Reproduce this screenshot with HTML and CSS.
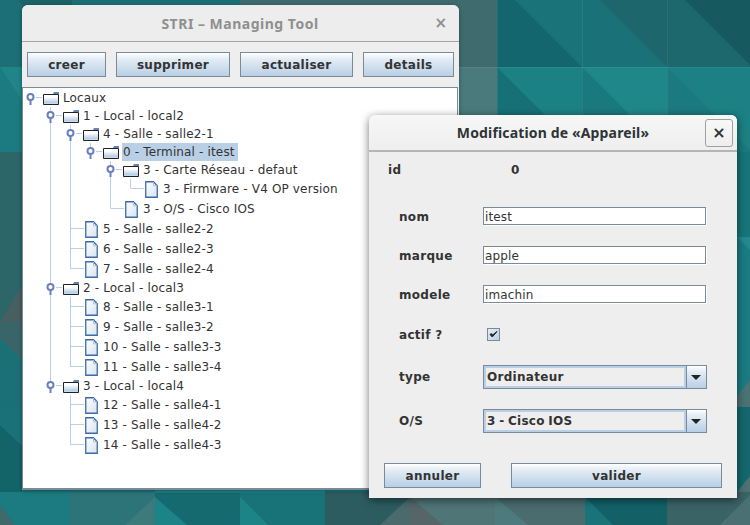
FILE: index.html
```html
<!DOCTYPE html>
<html>
<head>
<title>STRI - Managing Tool</title>
<meta charset="utf-8">
<link rel="stylesheet" href="styles.css">
</head>
<body>
<div class="desktop">

  <!-- wallpaper tiles, 85px grid -->
  <svg class="wallpaper" width="750" height="525" viewBox="0 0 750 525">
    <rect width="750" height="525" fill="#1a7379"/>
    <!-- top row -->
    <rect x="0" y="0" width="72" height="67" fill="#1b6f75"/>
    <polygon points="0,-18 72,-18 72,54" fill="#1a6469"/>
    <rect x="72" y="0" width="168" height="67" fill="#1b7076"/>
    <rect x="240" y="0" width="257" height="67" fill="#3f6b6e"/>
    <rect x="497" y="0" width="85" height="67" fill="#14666e"/>
    <polygon points="497,-18 582,-18 582,67" fill="#1a7379"/>
    <rect x="582" y="0" width="85" height="67" fill="#1a7278"/>
    <polygon points="582,-18 667,-18 667,67" fill="#1c666c"/>
    <rect x="667" y="0" width="83" height="67" fill="#1c686d"/>
    <polygon points="667,-18 752,-18 752,67" fill="#165a60"/>
    <!-- second row -->
    <rect x="0" y="67" width="72" height="85" fill="#1b7b80"/>
    <polygon points="0,67 22,67 40,100 22,100" fill="#208589"/>
    <rect x="412" y="67" width="85" height="85" fill="#4a7a7c"/>
    <rect x="497" y="67" width="85" height="85" fill="#167177"/>
    <polygon points="497,67 582,67 582,152" fill="#1c8185"/>
    <rect x="582" y="67" width="85" height="85" fill="#19797e"/>
    <polygon points="582,67 667,67 667,152" fill="#1f8789"/>
    <rect x="667" y="67" width="83" height="85" fill="#1a7a80"/>
    <polygon points="667,67 752,67 752,152" fill="#1c8084"/>
    <!-- right strip -->
    <rect x="737" y="152" width="13" height="85" fill="#177579"/>
    <rect x="737" y="237" width="13" height="85" fill="#1a7c82"/>
    <polygon points="737,237 750,237 750,250" fill="#23898d"/>
    <rect x="737" y="322" width="13" height="85" fill="#1a7c82"/>
    <polygon points="737,396 750,380 750,407 737,407" fill="#4c7273"/>
    <rect x="737" y="407" width="13" height="85" fill="#14686d"/>
    <polygon points="737,492 750,476 750,492" fill="#4c7273"/>
    <!-- left strip -->
    <rect x="0" y="152" width="22" height="170" fill="#2c6669"/>
    <polygon points="0,322 22,285 22,322" fill="#485f62"/>
    <rect x="0" y="322" width="22" height="85" fill="#1b7076"/>
    <polygon points="0,322 22,322 22,360 0,338" fill="#3a6568"/>
    <rect x="0" y="407" width="22" height="85" fill="#136469"/>
    <polygon points="0,407 22,407 22,446 0,425" fill="#1a7278"/>
    <!-- bottom row -->
    <rect x="0" y="492" width="70" height="33" fill="#1c7b80"/>
    <polygon points="0,505 15,525 0,525" fill="#3e6a6c"/>
    <rect x="70" y="492" width="85" height="33" fill="#2c7478"/>
    <polygon points="125,525 155,497 155,525" fill="#3d7a7c"/>
    <rect x="155" y="492" width="85" height="33" fill="#156a70"/>
    <polygon points="155,497 187,525 155,525" fill="#1c8387"/>
    <rect x="240" y="492" width="85" height="33" fill="#187378"/>
    <polygon points="240,497 268,525 240,525" fill="#1c8387"/>
    <rect x="155" y="490" width="170" height="3" fill="#1c8387"/>
    <rect x="325" y="492" width="85" height="33" fill="#2c5c60"/>
    <polygon points="380,525 410,497 410,525" fill="#4a6a6c"/>
    <rect x="410" y="492" width="85" height="33" fill="#4f7577"/>
    <polygon points="410,497 443,525 410,525" fill="#556568"/>
    <rect x="495" y="492" width="90" height="33" fill="#4a6c6e"/>
    <polygon points="495,497 528,525 495,525" fill="#4d7a7c"/>
    <polygon points="585,497 667,497 667,525 613,525" fill="#136067"/>
    <rect x="667" y="492" width="83" height="33" fill="#3a6366"/>
    <polygon points="720,525 750,495 750,525" fill="#4a7073"/>
    <!-- grid seams -->
    <path d="M497.5 0V115M582.5 0V115M667.5 0V115M459 67.5H750" stroke="#fff" stroke-opacity=".06" fill="none"/>
  </svg>

  <!-- shared tree icons -->
  <svg class="defs" width="0" height="0">
    <defs>
      <linearGradient id="folderFill" x1="0" y1="0" x2="0" y2="1">
        <stop offset="0" stop-color="#ffffff"/>
        <stop offset=".25" stop-color="#ffffff"/>
        <stop offset=".8" stop-color="#b8cfe5"/>
        <stop offset="1" stop-color="#dbe6f1"/>
      </linearGradient>
      <linearGradient id="fileFill" x1="0" y1="0" x2="1" y2="1">
        <stop offset="0" stop-color="#ffffff"/>
        <stop offset="1" stop-color="#d6e3f1"/>
      </linearGradient>
      <symbol id="folder" viewBox="0 0 16 13">
        <path d="M.5 2.5H15.5V12.5H.5z" fill="url(#folderFill)" stroke="#222"/>
        <path d="M10 2 11 0H16V2z" fill="#6382bf"/>
      </symbol>
      <symbol id="file" viewBox="0 0 13 17">
        <path d="M.75 .75H8.5L12.25 4.8V16.25H.75z" fill="url(#fileFill)" stroke="#3c6ba5" stroke-width="1.3"/>
        <path d="M8.5 1V4.8H12" fill="none" stroke="#a9c1dc"/>
      </symbol>
      <symbol id="handle" viewBox="0 0 9 12">
        <circle cx="4.5" cy="4" r="3" fill="#fff" stroke="#6a7fc0" stroke-width="2"/>
        <path d="M4.5 7V12" stroke="#6a7fc0" stroke-width="2"/>
      </symbol>
    </defs>
  </svg>

  <!-- main window -->
  <div class="window main-window">
    <div class="titlebar">
      <span class="title muted">STRI – Managing Tool</span>
      <span class="close-plain">×</span>
    </div>
    <div class="toolbar">
      <button class="btn btn-creer">creer</button>
      <button class="btn btn-suppr">supprimer</button>
      <button class="btn btn-actu">actualiser</button>
      <button class="btn btn-details">details</button>
    </div>
    <div class="tree">
      <svg class="tree-lines" width="435" height="400" viewBox="23 88 435 400">
        <path class="guide" d="M50.5 107V386M70.5 125V269M70.5 297V367M70.5 395V445M90.5 143V150M110.5 161V208.5M130.5 179V188.5
          M36 97.5H42M56 115.5H62M76 133.5H82M96 151.5H102M116 169.5H122M56 287.5H62M56 385.5H62
          M131 188.5H144M111 208.5H124
          M71 228.5H84M71 248.5H84M71 268.5H84
          M71 306.5H84M71 326.5H84M71 346.5H84M71 366.5H84
          M71 404.5H84M71 424.5H84M71 444.5H84"/>
        <use href="#handle" x="26" y="93" width="9" height="12"/>
        <use href="#handle" x="46" y="111" width="9" height="12"/>
        <use href="#handle" x="66" y="129" width="9" height="12"/>
        <use href="#handle" x="86" y="147" width="9" height="12"/>
        <use href="#handle" x="106" y="165" width="9" height="12"/>
        <use href="#handle" x="46" y="283" width="9" height="12"/>
        <use href="#handle" x="46" y="381" width="9" height="12"/>
      </svg>

      <div class="row folder d0"><svg class="ico-folder"><use href="#folder"/></svg><span class="label">Locaux</span></div>
      <div class="row folder d1"><svg class="ico-folder"><use href="#folder"/></svg><span class="label">1 - Local - local2</span></div>
      <div class="row folder d2"><svg class="ico-folder"><use href="#folder"/></svg><span class="label">4 - Salle - salle2-1</span></div>
      <div class="row folder d3"><svg class="ico-folder"><use href="#folder"/></svg><span class="label selected">0 - Terminal - itest</span></div>
      <div class="row folder d4"><svg class="ico-folder"><use href="#folder"/></svg><span class="label">3 - Carte Réseau - defaut</span></div>
      <div class="row leaf d5"><svg class="ico-file"><use href="#file"/></svg><span class="label">3 - Firmware - V4 OP version</span></div>
      <div class="row leaf d4"><svg class="ico-file"><use href="#file"/></svg><span class="label">3 - O/S - Cisco IOS</span></div>
      <div class="row leaf d2"><svg class="ico-file"><use href="#file"/></svg><span class="label">5 - Salle - salle2-2</span></div>
      <div class="row leaf d2"><svg class="ico-file"><use href="#file"/></svg><span class="label">6 - Salle - salle2-3</span></div>
      <div class="row leaf d2"><svg class="ico-file"><use href="#file"/></svg><span class="label">7 - Salle - salle2-4</span></div>
      <div class="row folder d1"><svg class="ico-folder"><use href="#folder"/></svg><span class="label">2 - Local - local3</span></div>
      <div class="row leaf d2"><svg class="ico-file"><use href="#file"/></svg><span class="label">8 - Salle - salle3-1</span></div>
      <div class="row leaf d2"><svg class="ico-file"><use href="#file"/></svg><span class="label">9 - Salle - salle3-2</span></div>
      <div class="row leaf d2"><svg class="ico-file"><use href="#file"/></svg><span class="label">10 - Salle - salle3-3</span></div>
      <div class="row leaf d2"><svg class="ico-file"><use href="#file"/></svg><span class="label">11 - Salle - salle3-4</span></div>
      <div class="row folder d1"><svg class="ico-folder"><use href="#folder"/></svg><span class="label">3 - Local - local4</span></div>
      <div class="row leaf d2"><svg class="ico-file"><use href="#file"/></svg><span class="label">12 - Salle - salle4-1</span></div>
      <div class="row leaf d2"><svg class="ico-file"><use href="#file"/></svg><span class="label">13 - Salle - salle4-2</span></div>
      <div class="row leaf d2"><svg class="ico-file"><use href="#file"/></svg><span class="label">14 - Salle - salle4-3</span></div>
    </div>
  </div>

  <!-- edit dialog -->
  <div class="window dialog">
    <div class="titlebar dialog-bar">
      <span class="title">Modification de «Appareil»</span>
      <button class="close-btn">×</button>
    </div>
    <div class="form">
      <div class="field field-id"><span class="field-name">id</span><span class="id-value">0</span></div>
      <div class="field"><span class="field-name">nom</span><input class="text-input" value="itest"></div>
      <div class="field"><span class="field-name">marque</span><input class="text-input" value="apple"></div>
      <div class="field"><span class="field-name">modele</span><input class="text-input" value="imachin"></div>
      <div class="field field-check">
        <span class="field-name">actif ?</span>
        <span class="check"><svg width="11" height="11" viewBox="0 0 11 11"><path d="M2 5.5 4.3 8 9 2.5 4.6 6 3.4 4.6z" fill="#222" stroke="#222"/></svg></span>
      </div>
      <div class="field field-select">
        <span class="field-name">type</span>
        <div class="combo"><span class="combo-value">Ordinateur</span><span class="combo-arrow"></span></div>
      </div>
      <div class="field field-select os-row">
        <span class="field-name">O/S</span>
        <div class="combo"><span class="combo-value">3 - Cisco IOS</span><span class="combo-arrow"></span></div>
      </div>
      <div class="actions">
        <button class="btn btn-annuler">annuler</button>
        <button class="btn btn-valider">valider</button>
      </div>
    </div>
  </div>

</div>
</body>
</html>
```

FILE: styles.css
```css
* {
  box-sizing: border-box;
}

body {
  margin: 0;
  overflow: hidden;
  font-family: "DejaVu Sans", sans-serif;
  font-size: 12px;
  color: #333;
}

.desktop {
  position: relative;
  width: 750px;
  height: 525px;
  overflow: hidden;
}

.wallpaper {
  position: absolute;
  left: 0;
  top: 0;
}

.defs {
  position: absolute;
}

/* windows */
.window {
  position: absolute;
  display: flex;
  flex-direction: column;
  background: #eeeeee;
  border-radius: 6px 6px 0 0;
}

.main-window {
  left: 22px;
  top: 5px;
  width: 437px;
  height: 485px;
  box-shadow: 0 1px 4px rgba(0, 0, 0, 0.35);
}

.dialog {
  left: 369px;
  top: 115px;
  width: 368px;
  height: 383px;
  box-shadow: 0 2px 9px rgba(0, 0, 0, 0.55);
}

.titlebar {
  position: relative;
  flex: none;
  display: flex;
  align-items: center;
  justify-content: center;
  height: 37px;
  border-bottom: 1px solid #a3a3a3;
  border-radius: 6px 6px 0 0;
  background: #ededed;
}

.title {
  font-family: "Noto Sans", sans-serif;
  font-size: 14px;
  font-weight: 700;
  letter-spacing: 0.15px;
  color: #2e3436;
}

.title.muted {
  color: #8f8f8f;
  letter-spacing: 0.5px;
  margin-right: 1px;
}

.close-plain {
  position: absolute;
  right: 12px;
  top: 9px;
  font-size: 15px;
  font-weight: 700;
  color: #8f8f8f;
}

.dialog-bar {
  border-bottom: 2px solid #b5b5b5;
  background: linear-gradient(#f7f7f7, #eeeeee);
}

.close-btn {
  position: absolute;
  right: 4px;
  top: 4px;
  width: 28px;
  height: 28px;
  padding: 0;
  font-family: "DejaVu Sans", sans-serif;
  font-size: 16px;
  font-weight: 700;
  line-height: 24px;
  color: #2e3436;
  background: linear-gradient(#f8f8f8, #eeeeee);
  border: 1px solid #a0a0a0;
  border-radius: 3px;
}

/* metal look buttons */
.btn {
  height: 25px;
  padding: 0;
  font-family: "DejaVu Sans", sans-serif;
  font-size: 12px;
  font-weight: 700;
  letter-spacing: 0.3px;
  color: #333;
  border: 1px solid #7a8a99;
  background: linear-gradient(#ffffff, #e4edf5 25%, #b8cfe5);
}

.toolbar {
  flex: none;
  display: flex;
  gap: 10px;
  padding: 10px 5px 10px 5px;
}

.btn-creer { width: 79px; }
.btn-suppr { width: 114px; }
.btn-actu { width: 113px; }
.btn-details { width: 91px; }

/* tree */
.tree {
  position: relative;
  flex: 1;
  margin-right: 1px;
  padding-top: 1px;
  background: #ffffff;
  border: 1px solid #7a8a99;
  border-width: 1px 1px 2px 1px;
}

.tree-lines {
  position: absolute;
  left: 0;
  top: 0;
}

.guide {
  fill: none;
  stroke: #b8cfe5;
  stroke-width: 1;
}

.row {
  position: relative;
  display: flex;
  align-items: center;
  white-space: nowrap;
  letter-spacing: 0.15px;
}

.row.folder { height: 18px; }
.row.leaf { height: 20px; }

.d0 { padding-left: 20px; }
.d1 { padding-left: 40px; }
.d2 { padding-left: 60px; }
.d3 { padding-left: 80px; }
.d4 { padding-left: 100px; }
.d5 { padding-left: 120px; }

.ico-folder {
  flex: none;
  width: 16px;
  height: 13px;
  margin-right: 3px;
}

.ico-file {
  flex: none;
  width: 13px;
  height: 17px;
  margin-left: 2px;
  margin-right: 4px;
}

.label {
  padding: 0 3px 0 1px;
  line-height: 18px;
}

.label.selected {
  background: #b8cfe5;
}

/* form */
.form {
  flex: 1;
  display: flex;
  flex-direction: column;
  gap: 21px;
  padding-top: 8px;
}

.field {
  display: flex;
  align-items: center;
  height: 18px;
  padding-left: 30px;
}

.field-name {
  width: 84px;
  padding-top: 1px;
  font-weight: 700;
  letter-spacing: 0.3px;
}

.field-id {
  margin-bottom: 8px;
  padding-left: 19px;
}

.field-id .field-name {
  width: 123px;
}

.id-value {
  padding-top: 1px;
  font-weight: 700;
}

.text-input {
  width: 223px;
  height: 18px;
  padding: 1px 1px 0;
  font-family: "DejaVu Sans", sans-serif;
  font-size: 12px;
  letter-spacing: 0.15px;
  color: #333;
  background: #ffffff;
  border: 1px solid #7a8a99;
  outline: none;
  box-shadow: 1px 1px 0 #ffffff;
}

.field-check {
  height: 20px;
}

.check {
  display: flex;
  align-items: center;
  justify-content: center;
  width: 13px;
  height: 13px;
  margin-left: 4px;
  border: 1px solid #7a8a99;
  background: linear-gradient(135deg, #e4edf5, #b8cfe5);
}

.field-select {
  height: 24px;
}

.field-select .field-name {
  padding-top: 0;
}

.os-row {
  margin-top: -1px;
}

.combo {
  display: flex;
  width: 224px;
  height: 24px;
  border: 1px solid #7a8a99;
}

.combo-value {
  flex: 1;
  padding-left: 1px;
  font-weight: 700;
  letter-spacing: 0.3px;
  word-spacing: -1px;
  line-height: 18px;
  background: #eeeeee;
  border: 2px solid #b8cfe5;
}

.combo-arrow {
  position: relative;
  width: 20px;
  border-left: 1px solid #7a8a99;
  background: linear-gradient(#ffffff, #e4edf5 25%, #b8cfe5);
}

.combo-arrow::after {
  content: "";
  position: absolute;
  left: 4px;
  top: 9px;
  border-style: solid;
  border-width: 5px 5px 0 5px;
  border-color: #222 transparent transparent transparent;
}

.actions {
  display: flex;
  gap: 30px;
  margin-top: 9px;
  padding-left: 15px;
}

.btn-annuler { width: 97px; }
.btn-valider { width: 211px; }
```
